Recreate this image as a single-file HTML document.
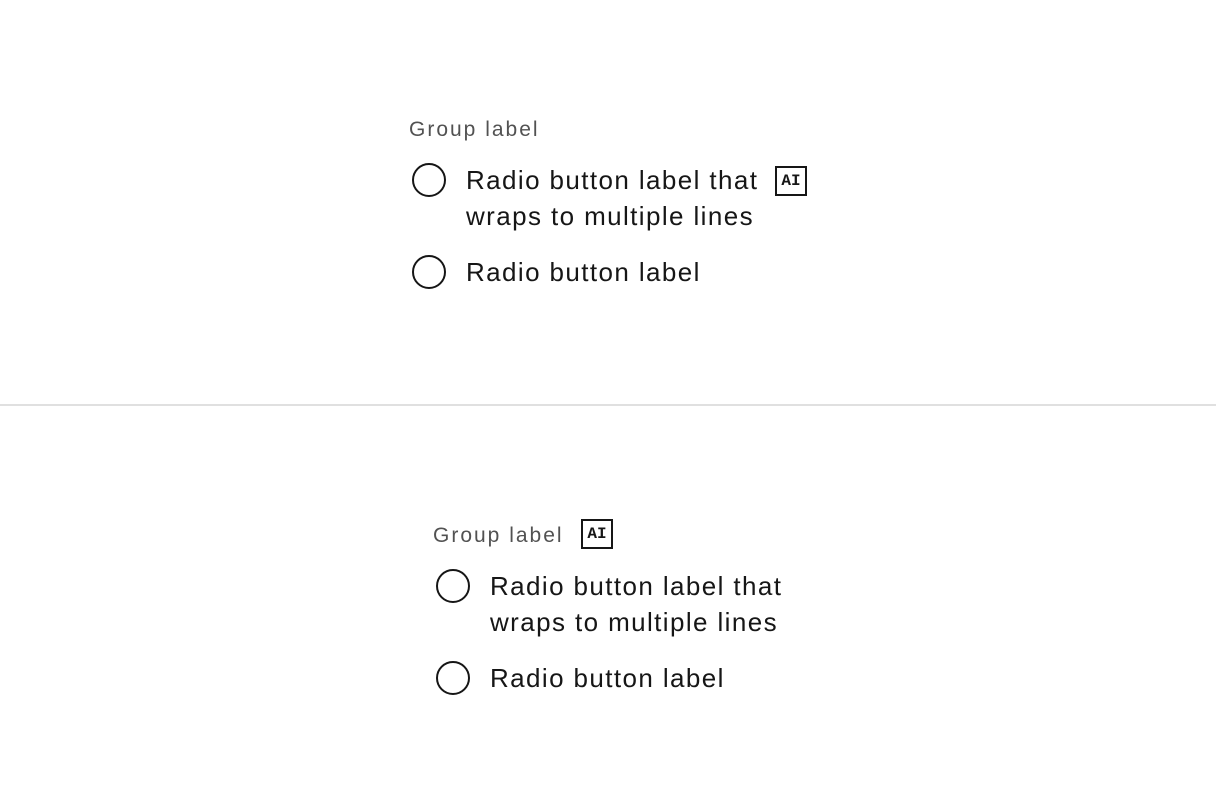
<!DOCTYPE html>
<html><head><style>
body{margin:0;width:1216px;height:810px;background:#fff;font-family:"Liberation Sans",sans-serif;color:#161616;position:relative;overflow:hidden}
.a{position:absolute;white-space:nowrap}
.g{font-size:21px;color:#525252;line-height:24px;letter-spacing:2px}
.t{font-size:26px;line-height:36px;letter-spacing:1.4px}
.c{position:absolute;width:34px;height:34px;border:2.5px solid #161616;border-radius:50%;box-sizing:border-box}
.ai{position:absolute;width:32px;height:30px;border:2px solid #161616;box-sizing:border-box;font-family:"Liberation Mono",monospace;font-size:16px;font-weight:bold;text-align:center;line-height:26px}
.hr{position:absolute;left:0;top:404px;width:1216px;height:2px;background:#e0e0e0}
</style></head><body>
<div class="a g" style="left:409px;top:118px">Group label</div>
<div class="c" style="left:412px;top:163px"></div>
<div class="a t" style="left:466px;top:162px">Radio button label that<br>wraps to multiple lines</div>
<div class="ai" style="left:775px;top:166px">AI</div>
<div class="c" style="left:412px;top:255px"></div>
<div class="a t" style="left:466px;top:254px">Radio button label</div>
<div class="hr"></div>
<div class="a g" style="left:433px;top:524px">Group label</div>
<div class="ai" style="left:581px;top:519px">AI</div>
<div class="c" style="left:436px;top:569px"></div>
<div class="a t" style="left:490px;top:568px">Radio button label that<br>wraps to multiple lines</div>
<div class="c" style="left:436px;top:661px"></div>
<div class="a t" style="left:490px;top:660px">Radio button label</div>
</body></html>
